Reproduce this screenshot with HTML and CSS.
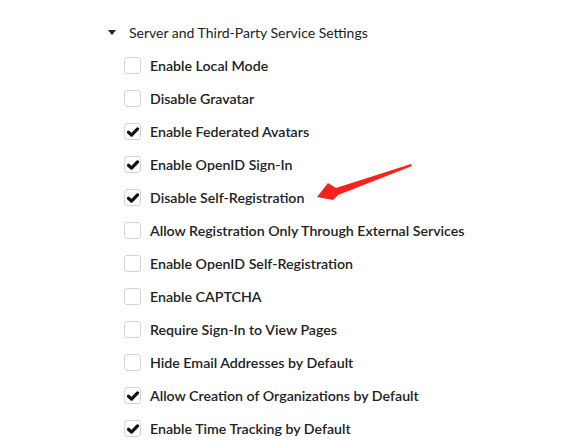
FILE: index.html
```html
<!DOCTYPE html>
<html>
<head>
<meta charset="utf-8">
<link rel="stylesheet" href="styles.css">
</head>
<body>
<div class="page">
  <div class="summary"><span class="tri"></span><span>Server and Third-Party Service Settings</span></div>
  <div class="list">
    <div class="row"><span class="box"></span><span class="lbl">Enable Local Mode</span></div>
    <div class="row"><span class="box"></span><span class="lbl">Disable Gravatar</span></div>
    <div class="row"><span class="box"><svg class="chk" viewBox="0 0 10 8"><path d="M1.2 4.2 L3.8 6.6 L8.8 1.4" fill="none" stroke="#111" stroke-width="2.7" stroke-linecap="round" stroke-linejoin="round"/></svg></span><span class="lbl">Enable Federated Avatars</span></div>
    <div class="row"><span class="box"><svg class="chk" viewBox="0 0 10 8"><path d="M1.2 4.2 L3.8 6.6 L8.8 1.4" fill="none" stroke="#111" stroke-width="2.7" stroke-linecap="round" stroke-linejoin="round"/></svg></span><span class="lbl">Enable OpenID Sign-In</span></div>
    <div class="row"><span class="box"><svg class="chk" viewBox="0 0 10 8"><path d="M1.2 4.2 L3.8 6.6 L8.8 1.4" fill="none" stroke="#111" stroke-width="2.7" stroke-linecap="round" stroke-linejoin="round"/></svg></span><span class="lbl">Disable Self-Registration</span></div>
    <div class="row"><span class="box"></span><span class="lbl">Allow Registration Only Through External Services</span></div>
    <div class="row"><span class="box"></span><span class="lbl">Enable OpenID Self-Registration</span></div>
    <div class="row"><span class="box"></span><span class="lbl">Enable CAPTCHA</span></div>
    <div class="row"><span class="box"></span><span class="lbl">Require Sign-In to View Pages</span></div>
    <div class="row"><span class="box"></span><span class="lbl">Hide Email Addresses by Default</span></div>
    <div class="row"><span class="box"><svg class="chk" viewBox="0 0 10 8"><path d="M1.2 4.2 L3.8 6.6 L8.8 1.4" fill="none" stroke="#111" stroke-width="2.7" stroke-linecap="round" stroke-linejoin="round"/></svg></span><span class="lbl">Allow Creation of Organizations by Default</span></div>
    <div class="row"><span class="box"><svg class="chk" viewBox="0 0 10 8"><path d="M1.2 4.2 L3.8 6.6 L8.8 1.4" fill="none" stroke="#111" stroke-width="2.7" stroke-linecap="round" stroke-linejoin="round"/></svg></span><span class="lbl">Enable Time Tracking by Default</span></div>
  </div>
  <svg class="arrow" width="120" height="50" viewBox="0 0 120 50"><polygon points="17,42 28,28 36,33 111,9 112,11 38,40 33,45" fill="#f5231b"/></svg>
</div>
</body>
</html>
```
FILE: styles.css
```css
html, body { margin: 0; padding: 0; background: #fff; }
body { font-family: Lato, "Noto Sans", sans-serif; color: #333; }
.page { position: relative; width: 586px; height: 446px; overflow: hidden; }
.summary { display: flex; align-items: center; height: 20px; padding: 22px 0 0 108px; font-size: 14px; color: #222; }
.tri { width: 0; height: 0; border-left: 4px solid transparent; border-right: 4px solid transparent; border-top: 5px solid #222; margin-right: 13px; }
.list { display: flex; flex-direction: column; padding: 7px 0 0 124px; }
.row { display: flex; align-items: center; height: 33px; }
.box { width: 15px; height: 15px; border: 1px solid #d4d4d5; border-radius: 3px; box-sizing: content-box; margin-right: 9px; display: flex; align-items: center; justify-content: center; flex: none; }
.chk { width: 12px; height: 10px; }
.lbl { font-size: 14.2px; font-weight: 600; color: #222; }
.arrow { position: absolute; left: 300px; top: 155px; }
```
